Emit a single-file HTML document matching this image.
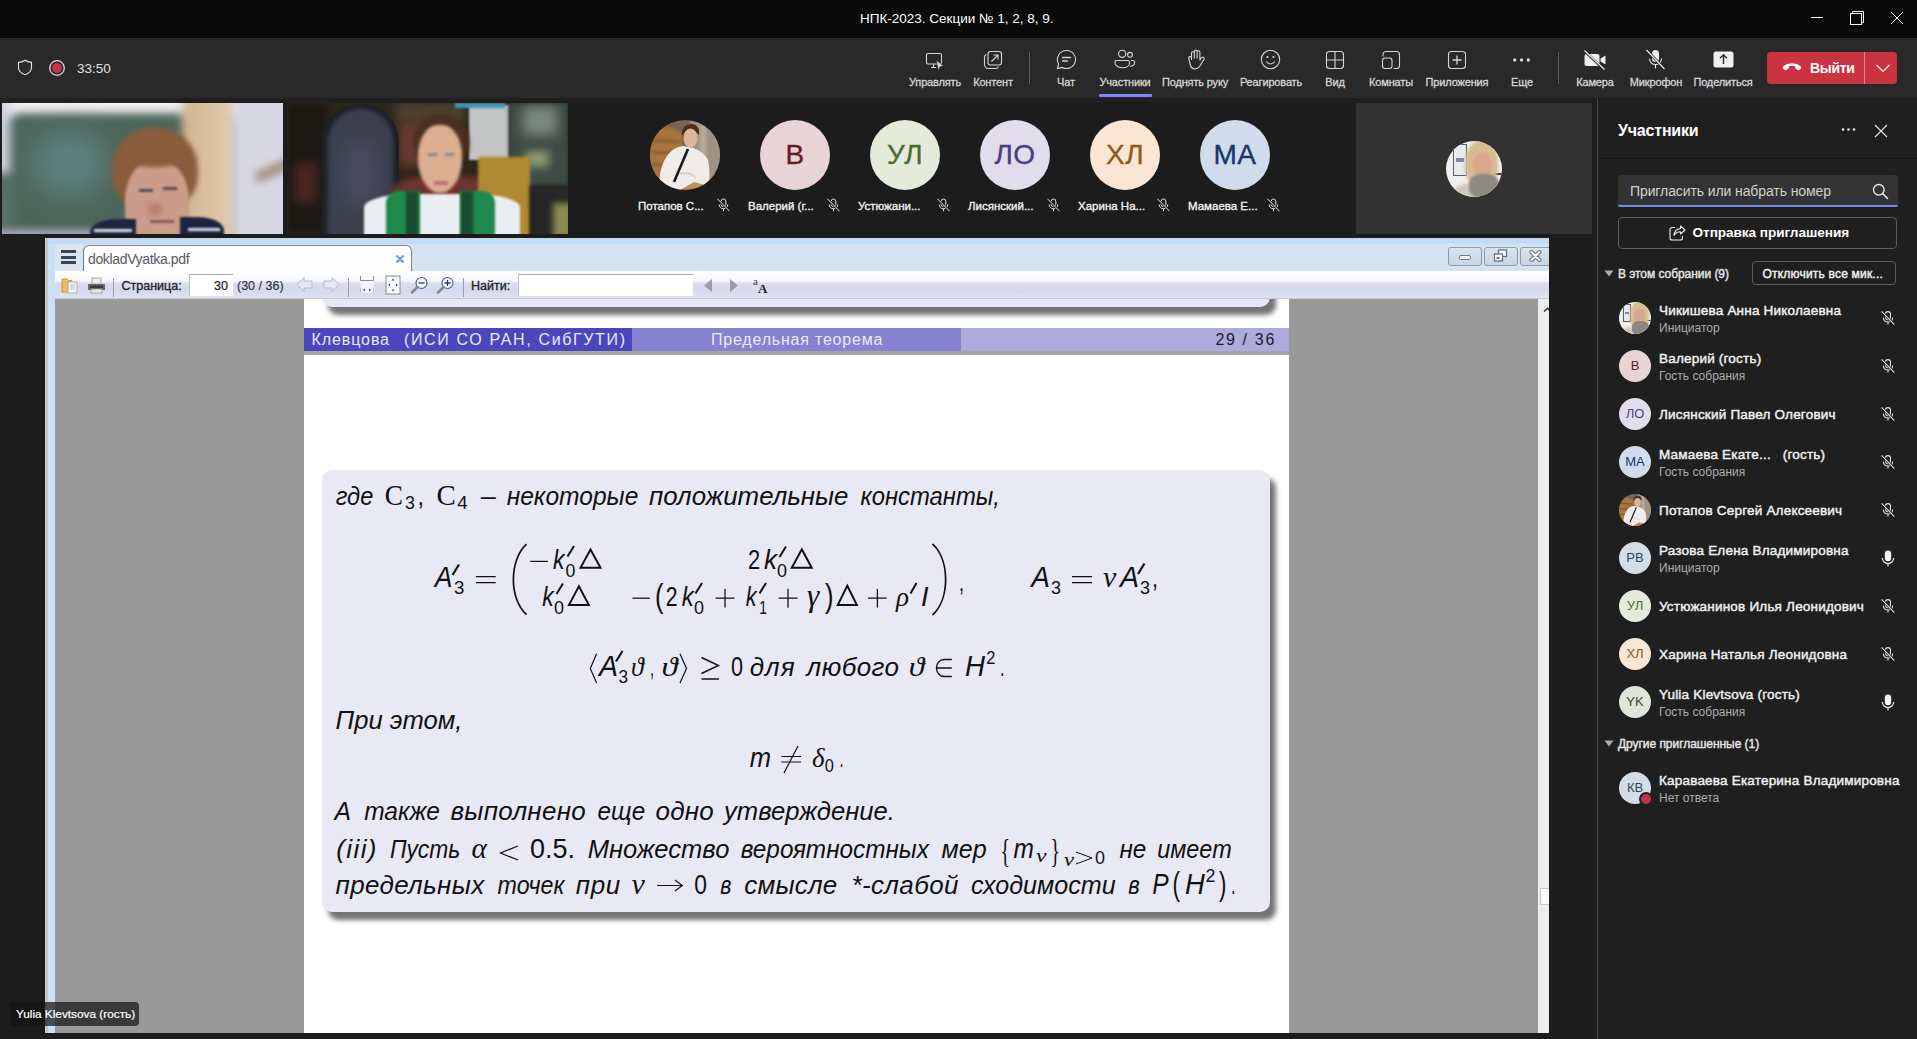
<!DOCTYPE html>
<html><head><meta charset="utf-8">
<style>
*{margin:0;padding:0;box-sizing:border-box}
html,body{width:1917px;height:1039px;overflow:hidden;background:#1c1c1c;font-family:"Liberation Sans",sans-serif}
.a{position:absolute}
.t{position:absolute;white-space:nowrap;line-height:1}
.lbl{color:#d6d6d6;font-size:11px;letter-spacing:-0.15px;-webkit-text-stroke:0.3px #d6d6d6}
.av{font-size:28px;letter-spacing:0.5px;-webkit-text-stroke:0.35px currentColor}
.nm{font-size:11.5px;color:#f0f0f0;-webkit-text-stroke:0.35px #f0f0f0}
.pn{font-size:13.5px;color:#f0f0f0;-webkit-text-stroke:0.45px #f0f0f0;letter-spacing:0.2px}
.ps{font-size:12px;color:#adadad}
.pav{left:1619px;width:32px;height:32px;border-radius:50%;font-size:13px;line-height:32px;text-align:center}
.foot{font-size:17.5px;letter-spacing:0.6px}
</style></head><body>
<svg width="0" height="0" style="position:absolute">
 <defs>
  <symbol id="micoff" viewBox="0 0 15 14">
   <rect x="5.2" y="1" width="4.6" height="7.6" rx="2.3" fill="none" stroke="#e6e6e6" stroke-width="1"/>
   <path d="M3.2 6.5C3.2 9 5.1 10.8 7.5 10.8S11.8 9 11.8 6.5M7.5 10.8V13.2" fill="none" stroke="#e6e6e6" stroke-width="1"/>
   <path d="M1.5 0.8L13.5 13.2" stroke="#1f1f1f" stroke-width="2.2"/>
   <path d="M1.5 0.8L13.5 13.2" stroke="#e6e6e6" stroke-width="1"/>
  </symbol>
  <symbol id="micon" viewBox="0 0 15 16">
   <rect x="4.5" y="0.5" width="6" height="10" rx="3" fill="#f0f0f0"/>
   <path d="M2.2 7.5C2.2 10.6 4.6 12.8 7.5 12.8S12.8 10.6 12.8 7.5M7.5 12.8V15.5" fill="none" stroke="#f0f0f0" stroke-width="1.1"/>
  </symbol>
 </defs>
</svg>
<!-- title bar -->
<div class="a" style="left:0;top:0;width:1917px;height:38px;background:#0a0a0a">
  <div class="t" style="left:860px;top:11.5px;font-size:13.5px;color:#fff">НПК-2023. Секции № 1, 2, 8, 9.</div>
  <div class="a" style="left:1811px;top:17px;width:12px;height:1px;background:#fff"></div>
  <svg class="a" style="left:1849px;top:10px" width="17" height="17" viewBox="0 0 17 17"><path d="M3.5 3.5V1.5H14.5V12.5H12.5" fill="none" stroke="#fff" stroke-width="1"/><rect x="1.5" y="3.5" width="11" height="11" fill="none" stroke="#fff" stroke-width="1"/></svg>
  <svg class="a" style="left:1890px;top:11px" width="14" height="14" viewBox="0 0 14 14"><path d="M1 1L13 13M13 1L1 13" stroke="#fff" stroke-width="1"/></svg>
</div>
<!-- toolbar -->
<div class="a" style="left:0;top:38px;width:1917px;height:60px;background:#292929">
  <svg class="a" style="left:17px;top:21px" width="16" height="17" viewBox="0 0 16 17"><path d="M8 1.2C5.8 2.6 3.6 3.3 1.5 3.4V8.6C1.5 11.8 3.6 14.2 8 15.8C12.4 14.2 14.5 11.8 14.5 8.6V3.4C12.4 3.3 10.2 2.6 8 1.2Z" fill="none" stroke="#e6e6e6" stroke-width="1.1"/></svg>
  <svg class="a" style="left:48px;top:21px" width="18" height="18" viewBox="0 0 18 18"><circle cx="9" cy="9" r="7.3" fill="none" stroke="#dcdcdc" stroke-width="1.3"/><circle cx="9" cy="9" r="5" fill="#c4314b"/></svg>
  <div class="t" style="left:77px;top:23.6px;font-size:13.5px;color:#e0e0e0">33:50</div>

  <!-- buttons: icons top 12 (abs 50), labels baseline abs 86 -> rel top 38.7 -->
  <svg class="a ic" style="left:924px;top:13px" width="20" height="20" viewBox="0 0 20 20"><rect x="2.5" y="2.5" width="15" height="10.5" rx="1.5" fill="none" stroke="#d6d6d6" stroke-width="1.1"/><path d="M7 16.5H12M9.5 13V16.5" stroke="#d6d6d6" stroke-width="1.1"/><path d="M12.3 9.2L19.6 15L16.2 15.6L14.2 19.6Z" fill="#d6d6d6" stroke="#292929" stroke-width="0.6"/></svg>
  <div class="t lbl" style="left:909px;top:39px;width:50px;text-align:center">Управлять</div>

  <svg class="a" style="left:983px;top:12px" width="20" height="20" viewBox="0 0 20 20"><rect x="5" y="1.5" width="13.5" height="13.5" rx="2.5" fill="none" stroke="#d6d6d6" stroke-width="1.1"/><path d="M3.2 4.5C2.2 5 1.5 6 1.5 7.2V14.5C1.5 16.7 3.3 18.5 5.5 18.5H12.8C14 18.5 15 17.8 15.5 16.8" fill="none" stroke="#d6d6d6" stroke-width="1.1"/><path d="M8.5 11.5L15 5M10.5 5H15V9.5" fill="none" stroke="#d6d6d6" stroke-width="1.1"/></svg>
  <div class="t lbl" style="left:968px;top:39px;width:50px;text-align:center">Контент</div>

  <div class="a" style="left:1029px;top:14px;width:1px;height:32px;background:#5c5c5c"></div>

  <svg class="a" style="left:1056px;top:11px" width="21" height="21" viewBox="0 0 21 21"><path d="M10.5 1.5A9 9 0 1 1 6.2 18.4L1.5 19.5L2.6 15A9 9 0 0 1 10.5 1.5Z" fill="none" stroke="#d6d6d6" stroke-width="1.1"/><path d="M6.5 8.5H14.5M6.5 12H11.5" stroke="#d6d6d6" stroke-width="1.3" stroke-linecap="round"/></svg>
  <div class="t lbl" style="left:1041px;top:39px;width:50px;text-align:center">Чат</div>

  <svg class="a" style="left:1114px;top:11px" width="22" height="20" viewBox="0 0 22 20"><circle cx="8.2" cy="4.8" r="3.6" fill="none" stroke="#d6d6d6" stroke-width="1.1"/><circle cx="16" cy="5.8" r="2.4" fill="none" stroke="#d6d6d6" stroke-width="1.1"/><path d="M2.5 11.5H14A1.5 1.5 0 0 1 15.5 13V14C15.5 17 12.5 18.8 8.8 18.8S1 17 1 14V13A1.5 1.5 0 0 1 2.5 11.5Z" fill="none" stroke="#d6d6d6" stroke-width="1.1"/><path d="M17 11.5H19A1.5 1.5 0 0 1 20.5 13V13.8C20.5 16 18.8 17.3 16 17.3" fill="none" stroke="#d6d6d6" stroke-width="1.1"/></svg>
  <div class="t lbl" style="left:1095px;top:39px;width:60px;text-align:center">Участники</div>
  <div class="a" style="left:1099px;top:56px;width:53px;height:2.5px;background:#7f85f5;border-radius:1px"></div>

  <svg class="a" style="left:1187px;top:11px" width="19" height="21" viewBox="0 0 19 21"><path d="M4.5 11V4.3C4.5 3.4 5.1 2.8 5.9 2.8S7.3 3.4 7.3 4.3V9.5M7.3 9.5V2.6C7.3 1.7 7.9 1.1 8.7 1.1S10.1 1.7 10.1 2.6V9.5M10.1 9.5V3.3C10.1 2.4 10.7 1.8 11.5 1.8S12.9 2.4 12.9 3.3V11L14.4 8.8C15 8 16 7.9 16.7 8.4C17.3 8.9 17.4 9.7 17 10.4L12.5 17.5C11.4 19.2 9.8 19.9 8 19.9C5.9 19.9 3.9 18.3 3.3 16L1.7 9.3C1.5 8.5 2 7.8 2.7 7.6C3.5 7.5 4.2 7.9 4.5 8.8" fill="none" stroke="#d6d6d6" stroke-width="1.1" stroke-linejoin="round"/></svg>
  <div class="t lbl" style="left:1160px;top:39px;width:70px;text-align:center">Поднять руку</div>

  <svg class="a" style="left:1260px;top:11px" width="21" height="21" viewBox="0 0 21 21"><circle cx="10.5" cy="10.5" r="9.2" fill="none" stroke="#d6d6d6" stroke-width="1.1"/><circle cx="7.5" cy="8" r="1.1" fill="#d6d6d6"/><circle cx="13.5" cy="8" r="1.1" fill="#d6d6d6"/><path d="M6.5 12.8C7.5 14.3 8.9 15 10.5 15S13.5 14.3 14.5 12.8" fill="none" stroke="#d6d6d6" stroke-width="1.1" stroke-linecap="round"/></svg>
  <div class="t lbl" style="left:1235px;top:39px;width:72px;text-align:center">Реагировать</div>

  <svg class="a" style="left:1325px;top:12px" width="20" height="20" viewBox="0 0 20 20"><rect x="1.5" y="1.5" width="17" height="17" rx="3" fill="none" stroke="#d6d6d6" stroke-width="1.1"/><path d="M10 1.5V18.5M1.5 10H18.5" stroke="#d6d6d6" stroke-width="1.1"/></svg>
  <div class="t lbl" style="left:1310px;top:39px;width:50px;text-align:center">Вид</div>

  <svg class="a" style="left:1381px;top:12px" width="20" height="20" viewBox="0 0 20 20"><path d="M2 6.5V4.5A3 3 0 0 1 5 1.5H15.5A3 3 0 0 1 18.5 4.5V15.5A3 3 0 0 1 15.5 18.5H12.5" fill="none" stroke="#d6d6d6" stroke-width="1.1"/><rect x="1.5" y="8" width="9.5" height="10.5" rx="2.5" fill="none" stroke="#d6d6d6" stroke-width="1.1"/></svg>
  <div class="t lbl" style="left:1361px;top:39px;width:60px;text-align:center">Комнаты</div>

  <svg class="a" style="left:1447px;top:12px" width="20" height="20" viewBox="0 0 20 20"><rect x="1.5" y="1.5" width="17" height="17" rx="3" fill="none" stroke="#d6d6d6" stroke-width="1.1"/><path d="M10 5.5V14.5M5.5 10H14.5" stroke="#d6d6d6" stroke-width="1.3"/></svg>
  <div class="t lbl" style="left:1422px;top:39px;width:70px;text-align:center">Приложения</div>

  <svg class="a" style="left:1512px;top:18px" width="20" height="8" viewBox="0 0 20 8"><circle cx="2.7" cy="4" r="1.7" fill="#d6d6d6"/><circle cx="9.5" cy="4" r="1.7" fill="#d6d6d6"/><circle cx="16.3" cy="4" r="1.7" fill="#d6d6d6"/></svg>
  <div class="t lbl" style="left:1497px;top:39px;width:50px;text-align:center">Еще</div>

  <div class="a" style="left:1558px;top:14px;width:1px;height:32px;background:#5c5c5c"></div>

  <svg class="a" style="left:1584px;top:12px" width="23" height="20" viewBox="0 0 23 20"><path d="M2.5 4H13.5A2 2 0 0 1 15.5 6V14A2 2 0 0 1 13.5 16H2.5A2 2 0 0 1 0.5 14V6A2 2 0 0 1 2.5 4Z" fill="#f0f0f0"/><path d="M16.5 8.5L21.5 5.5V14.5L16.5 11.5Z" fill="#f0f0f0"/><path d="M0 0.5L20 19.5" stroke="#292929" stroke-width="2.6"/><path d="M0.5 0.5L20.5 19.5" stroke="#f0f0f0" stroke-width="1.1"/></svg>
  <div class="t lbl" style="left:1570px;top:39px;width:50px;text-align:center">Камера</div>

  <svg class="a" style="left:1645px;top:11px" width="21" height="21" viewBox="0 0 21 21"><rect x="7" y="1" width="7" height="12" rx="3.5" fill="#f0f0f0"/><path d="M4.5 9.5C4.5 13 7.2 15.5 10.5 15.5S16.5 13 16.5 9.5M10.5 15.5V19.5" fill="none" stroke="#f0f0f0" stroke-width="1.1"/><path d="M1.5 1L19.5 20" stroke="#292929" stroke-width="2.6"/><path d="M1.5 1L19.5 20" stroke="#f0f0f0" stroke-width="1.1"/></svg>
  <div class="t lbl" style="left:1628px;top:39px;width:56px;text-align:center">Микрофон</div>

  <svg class="a" style="left:1713px;top:13px" width="21" height="17" viewBox="0 0 21 17"><rect x="0.5" y="0.5" width="20" height="16" rx="2.5" fill="#f0f0f0"/><path d="M10.5 13V4M7 7.3L10.5 3.8L14 7.3" fill="none" stroke="#292929" stroke-width="1.4"/></svg>
  <div class="t lbl" style="left:1690px;top:39px;width:66px;text-align:center">Поделиться</div>

  <div class="a" style="left:1767px;top:14px;width:130px;height:32px;background:#cc3340;border-radius:4px"></div>
  <div class="a" style="left:1864px;top:14px;width:1px;height:32px;background:#e4858e"></div>
  <svg class="a" style="left:1782px;top:24px" width="20" height="10" viewBox="0 0 20 10"><path d="M1.2 6.8C0.6 6.2 0.7 5.1 1.3 4.5C3.7 2.3 6.8 1.2 10 1.2S16.3 2.3 18.7 4.5C19.3 5.1 19.4 6.2 18.8 6.8L17.8 7.8C17.3 8.3 16.5 8.4 15.9 8L13.9 6.8C13.5 6.5 13.2 6 13.2 5.5V4.4C11.1 3.8 8.9 3.8 6.8 4.4V5.5C6.8 6 6.5 6.5 6.1 6.8L4.1 8C3.5 8.4 2.7 8.3 2.2 7.8Z" fill="#fff"/></svg>
  <div class="t" style="left:1810px;top:22.5px;font-size:14px;font-weight:bold;color:#fff;letter-spacing:-0.3px">Выйти</div>
  <svg class="a" style="left:1875px;top:25px" width="16" height="10" viewBox="0 0 16 10"><path d="M1.5 2L8 8.5L14.5 2" fill="none" stroke="#fff" stroke-width="1.2"/></svg>
</div>
<!-- stage bg -->
<div class="a" style="left:0;top:98px;width:1597px;height:941px;background:#1c1c1c"></div>
<div class="a" style="left:0;top:98px;width:1597px;height:5px;background:#1f1f1f"></div>
<!-- video 1 -->
<div class="a" style="left:2px;top:103px;width:281px;height:131px;overflow:hidden;background:#587068">
  <div class="a" style="left:-20px;top:-20px;width:330px;height:34px;background:#f6f2f4;filter:blur(5px)"></div>
  <div class="a" style="left:12px;top:12px;width:172px;height:135px;background:#4c665a;filter:blur(6px)"></div>
  <div class="a" style="left:30px;top:28px;width:75px;height:65px;background:#5c827e;filter:blur(14px);border-radius:50%"></div>
  <div class="a" style="left:180px;top:-10px;width:54px;height:160px;background:linear-gradient(90deg,#d4b48e,#e0ccb0);filter:blur(4px)"></div>
  <div class="a" style="left:230px;top:-10px;width:60px;height:160px;background:#d8d8e4;filter:blur(4px)"></div>
  <div class="a" style="left:252px;top:62px;width:40px;height:10px;background:#a08878;filter:blur(4px);transform:rotate(-25deg)"></div>
  <div class="a" style="left:-10px;top:-10px;width:18px;height:80px;background:#d0d2de;filter:blur(5px)"></div>
  <div class="a" style="left:-10px;top:126px;width:130px;height:14px;background:#9aa4b4;filter:blur(3px)"></div>
  <!-- woman -->
  <div class="a" style="left:110px;top:24px;width:86px;height:82px;background:#8a5c3c;border-radius:50% 50% 40% 40%;filter:blur(2.5px)"></div>
  <div class="a" style="left:123px;top:57px;width:64px;height:90px;background:#cc9c8a;border-radius:45% 45% 42% 42%;filter:blur(1.5px)"></div>
  <div class="a" style="left:118px;top:40px;width:70px;height:24px;background:#8a5c3c;border-radius:40% 40% 50% 50%;filter:blur(2px)"></div>
  <div class="a" style="left:137px;top:86px;width:14px;height:3px;background:#5a4a50;filter:blur(1.2px)"></div>
  <div class="a" style="left:161px;top:84px;width:14px;height:3px;background:#5a4a50;filter:blur(1.2px)"></div>
  <div class="a" style="left:146px;top:100px;width:14px;height:12px;background:#b88272;filter:blur(2.5px)"></div>
  <div class="a" style="left:148px;top:117px;width:24px;height:3px;background:#8a5a5a;filter:blur(1.2px)"></div>
  <div class="a" style="left:88px;top:116px;width:46px;height:22px;background:#1e2440;border-radius:60% 0 0 0;filter:blur(1px)"></div>
  <div class="a" style="left:178px;top:114px;width:44px;height:22px;background:#1e2440;border-radius:0 60% 0 0;filter:blur(1px)"></div>
  <div class="a" style="left:92px;top:126px;width:38px;height:3px;background:#d8dce8;filter:blur(0.8px)"></div>
  <div class="a" style="left:186px;top:125px;width:32px;height:3px;background:#d8dce8;filter:blur(0.8px)"></div>
</div>
<!-- video 2 -->
<div class="a" style="left:287px;top:103px;width:281px;height:131px;overflow:hidden;background:#2b2619">
  <div class="a" style="left:0;top:0;width:40px;height:131px;background:#1c1814;filter:blur(3px)"></div>
  <div class="a" style="left:8px;top:60px;width:22px;height:40px;background:#4a2620;filter:blur(5px)"></div>
  <div class="a" style="left:108px;top:0px;width:70px;height:20px;background:#4c4230;filter:blur(5px)"></div>
  <div class="a" style="left:112px;top:18px;width:28px;height:45px;background:#6a3a30;filter:blur(5px)"></div>
  <div class="a" style="left:35px;top:1px;width:77px;height:138px;background:#1e2026;border-radius:38px 38px 0 0"></div>
  <div class="a" style="left:41px;top:6px;width:65px;height:132px;background:#3c3f4e;border-radius:32px 32px 0 0;filter:blur(2px)"></div>
  <div class="a" style="left:58px;top:40px;width:30px;height:60px;background:#4a4e60;filter:blur(10px)"></div>
  <div class="a" style="left:103px;top:72px;width:112px;height:32px;background:#703430;border-radius:50%;filter:blur(3px)"></div>
  <div class="a" style="left:182px;top:2px;width:40px;height:55px;background:#c2c4c4;filter:blur(1px)"></div>
  <div class="a" style="left:168px;top:0px;width:50px;height:5px;background:#3a9ab8;filter:blur(1px)"></div>
  <div class="a" style="left:222px;top:0px;width:59px;height:84px;background:#3e4c44;filter:blur(2px)"></div>
  <div class="a" style="left:236px;top:4px;width:34px;height:28px;background:#7a8a80;filter:blur(6px)"></div>
  <div class="a" style="left:238px;top:48px;width:24px;height:16px;background:#8a9a70;filter:blur(4px)"></div>
  <div class="a" style="left:191px;top:54px;width:52px;height:82px;background:#b08a32;filter:blur(1.5px)"></div>
  <div class="a" style="left:243px;top:82px;width:45px;height:55px;background:#262626;filter:blur(2px)"></div>
  <div class="a" style="left:266px;top:100px;width:20px;height:35px;background:#8a8a50;filter:blur(3px)"></div>
  <!-- woman -->
  <div class="a" style="left:126px;top:10px;width:56px;height:58px;background:#4a3020;border-radius:50%;filter:blur(2px)"></div>
  <div class="a" style="left:131px;top:22px;width:44px;height:68px;background:#dcae90;border-radius:45% 45% 50% 50%;filter:blur(1.5px)"></div>
  <div class="a" style="left:77px;top:91px;width:156px;height:45px;background:#eaeef2;border-radius:30% 30% 0 0;filter:blur(1px)"></div>
  <div class="a" style="left:99px;top:88px;width:34px;height:48px;background:#1f8a4c;filter:blur(1px);border-radius:12px 0 0 0"></div>
  <div class="a" style="left:173px;top:88px;width:35px;height:48px;background:#1f8a4c;filter:blur(1px);border-radius:0 12px 0 0"></div>
  <div class="a" style="left:119px;top:88px;width:12px;height:48px;background:#1a4a30;filter:blur(1.5px)"></div>
  <div class="a" style="left:174px;top:88px;width:12px;height:48px;background:#1a4a30;filter:blur(1.5px)"></div>
  <div class="a" style="left:141px;top:50px;width:9px;height:3px;background:#8a8a90;filter:blur(1px)"></div>
  <div class="a" style="left:158px;top:50px;width:9px;height:3px;background:#8a8a90;filter:blur(1px)"></div>
  <div class="a" style="left:147px;top:78px;width:14px;height:4px;background:#c0707a;filter:blur(1px)"></div>
</div>

<!-- avatar row -->
<svg class="a" style="left:650px;top:120px" width="70" height="70" viewBox="0 0 70 70">
  <defs><clipPath id="cpp1"><circle cx="35" cy="35" r="35"/></clipPath><filter id="blp1" x="-20%" y="-20%" width="140%" height="140%"><feGaussianBlur stdDeviation="1.5"/></filter></defs>
  <g clip-path="url(#cpp1)">
    <rect width="70" height="70" fill="#7a6454"/>
    <g filter="url(#blp1)">
      <rect x="40" y="0" width="34" height="70" fill="#a09282"/>
      <rect x="50" y="5" width="6" height="50" fill="#b8aa9a"/>
      <path d="M-2 10C8 4 22 6 32 14V70H-2Z" fill="#a8743e"/>
      <path d="M0 20L30 22M2 32L30 34M2 44L30 46" stroke="#7a5028" stroke-width="2"/>
      <path d="M28 70C30 58 44 52 72 56V70Z" fill="#c0905a"/>
    </g>
    <path d="M32 16C31 9 35 4 41 4C47 4 50 8 49 15L47 13C44 10 37 10 34 13Z" fill="#4a3020"/>
    <ellipse cx="40.5" cy="18" rx="7" ry="9.5" fill="#e0b49c"/>
    <path d="M10 68C8 52 14 34 26 28C30 26 36 26 38 27C46 28 54 32 58 40C60 50 60 58 58 66L44 62L30 70Z" fill="#f0ecea"/>
    <path d="M38 29L24 62" stroke="#1a1a1a" stroke-width="2.6"/>
    <path d="M30 54C36 52 42 54 46 58" stroke="#d8d0cc" stroke-width="2" fill="none"/>
  </g>
</svg>
<div class="a" style="left:760px;top:120px;width:70px;height:70px;border-radius:50%;background:#e8d4d6"></div>
<div class="a" style="left:870px;top:120px;width:70px;height:70px;border-radius:50%;background:#e4ecd9"></div>
<div class="a" style="left:980px;top:120px;width:70px;height:70px;border-radius:50%;background:#e2dded"></div>
<div class="a" style="left:1090px;top:120px;width:70px;height:70px;border-radius:50%;background:#fbe6d3"></div>
<div class="a" style="left:1200px;top:120px;width:70px;height:70px;border-radius:50%;background:#d0dceb"></div>
<div class="t av" style="left:760px;top:141.3px;width:70px;text-align:center;color:#6b1a24">В</div>
<div class="t av" style="left:870px;top:141.3px;width:70px;text-align:center;color:#4c6b30">УЛ</div>
<div class="t av" style="left:980px;top:141.3px;width:70px;text-align:center;color:#4b4078">ЛО</div>
<div class="t av" style="left:1090px;top:141.3px;width:70px;text-align:center;color:#8a5a1e">ХЛ</div>
<div class="t av" style="left:1200px;top:141.3px;width:70px;text-align:center;color:#143868">МА</div>

<div class="t nm" style="left:638px;top:200.6px">Потапов С...</div>
<div class="t nm" style="left:748px;top:200.6px">Валерий (г...</div>
<div class="t nm" style="left:858px;top:200.6px">Устюжани...</div>
<div class="t nm" style="left:968px;top:200.6px">Лисянский...</div>
<div class="t nm" style="left:1078px;top:200.6px">Харина На...</div>
<div class="t nm" style="left:1188px;top:200.6px">Мамаева Е...</div>
<svg class="a" style="left:716px;top:198px" width="15" height="14"><use href="#micoff"/></svg>
<svg class="a" style="left:826px;top:198px" width="15" height="14"><use href="#micoff"/></svg>
<svg class="a" style="left:936px;top:198px" width="15" height="14"><use href="#micoff"/></svg>
<svg class="a" style="left:1046px;top:198px" width="15" height="14"><use href="#micoff"/></svg>
<svg class="a" style="left:1156px;top:198px" width="15" height="14"><use href="#micoff"/></svg>
<svg class="a" style="left:1266px;top:198px" width="15" height="14"><use href="#micoff"/></svg>

<!-- right tile -->
<div class="a" style="left:1356px;top:103px;width:236px;height:131px;background:#323232"></div>
<div class="a" style="left:1446px;top:140.5px;width:56px;height:56px;border-radius:50%;overflow:hidden;background:#f2f0ee">
  <div class="a" style="left:7.0px;top:3.0px;width:13.5px;height:32.0px;border:1px solid #5a5a68;background:#e6eaf2"></div>
  <div class="a" style="left:10.0px;top:17.0px;width:8.0px;height:4.0px;background:#7a88aa;filter:blur(0.6px)"></div>
  <div class="a" style="left:46.0px;top:32.0px;width:12.0px;height:2.0px;background:#3a3228"></div>
  <div class="a" style="left:19.0px;top:-1.0px;width:33.0px;height:44.0px;background:#d6bc90;border-radius:50% 50% 35% 35%;filter:blur(1.5px)"></div>
  <div class="a" style="left:27.0px;top:12.0px;width:19.0px;height:24.0px;background:#d8a68e;border-radius:45%;filter:blur(1.0px)"></div>
  <div class="a" style="left:8.0px;top:42.0px;width:48.0px;height:20.0px;background:#d2cabe;border-radius:40% 40% 0 0;filter:blur(1.5px)"></div>
  <div class="a" style="left:23.0px;top:33.0px;width:30.0px;height:24.0px;background:#8c8882;border-radius:40%;filter:blur(1.2px)"></div>
</div>
<!-- PDF viewer window -->
<div class="a" style="left:45px;top:238px;width:1504px;height:795px;background:#c6dcf2;overflow:hidden">
  <div class="a" style="left:0;top:0;width:3px;height:795px;background:#c4c8cc"></div>
  <div class="a" style="left:3px;top:0;width:1501px;height:6px;background:#c2dcf8"></div>
  <div class="a" style="left:0;top:0;width:1504px;height:1px;background:#d2d6da"></div>
  <div class="a" style="left:10px;top:6px;width:1494px;height:27px;background:#d5e3f0"></div>
  <div class="a" style="left:3px;top:6px;width:7px;height:789px;background:#c8e0f8"></div>
  <!-- hamburger -->
  <div class="a" style="left:10px;top:7px;width:28px;height:26px;background:#dbe5ef"></div>
  <div class="a" style="left:16px;top:12px;width:15px;height:3px;background:#36465a"></div>
  <div class="a" style="left:16px;top:17.5px;width:15px;height:3px;background:#36465a"></div>
  <div class="a" style="left:16px;top:23px;width:15px;height:3px;background:#36465a"></div>
  <!-- tab -->
  <div class="a" style="left:38px;top:7px;width:329px;height:27px;background:#fdfdfe;border-top:1px solid #7c8694;border-left:1px solid #6c7480;border-right:1.5px solid #7a808a;border-radius:6px 6px 0 0"></div>
  <div class="t" style="left:43px;top:13.7px;font-size:14px;color:#5a5a60;letter-spacing:-0.35px">dokladVyatka.pdf</div>
  <svg class="a" style="left:350px;top:16px" width="10" height="10" viewBox="0 0 10 10"><path d="M1.5 1.5L8.5 8.5M8.5 1.5L1.5 8.5" stroke="#7c9cc2" stroke-width="2"/></svg>
  <!-- window buttons -->
  <div class="a" style="left:1403px;top:9px;width:34px;height:19px;border:1px solid #8a9aac;border-radius:3px;background:linear-gradient(#d8e4ee,#c8d6e4)"></div>
  <div class="a" style="left:1414px;top:17px;width:12px;height:5px;border:1px solid #707880;border-radius:2px;background:#fff"></div>
  <div class="a" style="left:1439px;top:9px;width:34px;height:19px;border:1px solid #8a9aac;border-radius:3px;background:linear-gradient(#d8e4ee,#c8d6e4)"></div>
  <svg class="a" style="left:1448px;top:11px" width="16" height="14" viewBox="0 0 16 14"><rect x="5.5" y="1" width="8" height="6.5" fill="#fff" stroke="#6a7078" stroke-width="1.3"/><rect x="1.5" y="5" width="8" height="7" fill="#fff" stroke="#6a7078" stroke-width="1.3"/><rect x="3.5" y="8" width="3" height="2" fill="#6a7078"/></svg>
  <div class="a" style="left:1475px;top:9px;width:34px;height:19px;border:1px solid #8a9aac;border-radius:3px;background:linear-gradient(#d8e4ee,#c8d6e4)"></div>
  <svg class="a" style="left:1484px;top:12px" width="13" height="12" viewBox="0 0 13 12"><path d="M2.5 2L10.5 10M10.5 2L2.5 10" stroke="#6a7078" stroke-width="4.2" stroke-linecap="round"/><path d="M2.5 2L10.5 10M10.5 2L2.5 10" stroke="#fafafa" stroke-width="2.2" stroke-linecap="round"/></svg>
  <!-- toolbar -->
  <div class="a" style="left:10px;top:33px;width:1494px;height:28px;background:linear-gradient(#ffffff 0%,#f8f8fc 35%,#dadcee 45%,#d6d9ec 70%,#e2e4f4 100%)"></div>
  <div class="a" style="left:10px;top:60px;width:1494px;height:1px;background:#c6c8d8"></div>
  <!-- folder icon -->
  <svg class="a" style="left:16px;top:38px" width="18" height="18" viewBox="0 0 18 18"><path d="M1 3H6L7.5 4.5H11V16H1Z" fill="#e8c060" stroke="#b89030" stroke-width="0.8"/><rect x="7" y="6" width="9" height="11" fill="#f4f4f4" stroke="#a0a0a0" stroke-width="0.8"/><path d="M9 9H14M9 11H14M9 13H14" stroke="#b0b8c0" stroke-width="0.8"/></svg>
  <!-- print icon -->
  <svg class="a" style="left:42px;top:39px" width="19" height="17" viewBox="0 0 19 17"><rect x="5" y="1" width="9" height="6" fill="#f0f0f0" stroke="#9a9a9a" stroke-width="0.8"/><path d="M1 7H18V13H1Z" fill="#6a6a70"/><rect x="3" y="8.5" width="13" height="3" fill="#3a3a40"/><rect x="4" y="12" width="11" height="4" fill="#e8e8e8" stroke="#9a9a9a" stroke-width="0.8"/></svg>
  <div class="a" style="left:68px;top:40px;width:1px;height:19px;background:#9a9aa8"></div>
  <div class="t" style="left:76.5px;top:42px;font-size:12.5px;color:#20202a;-webkit-text-stroke:0.3px #20202a">Страница:</div>
  <div class="a" style="left:144px;top:36px;width:44px;height:22px;background:#fff;border-top:1px solid #a8a8b0;border-left:1px solid #c0c0c8"></div>
  <div class="t" style="left:169px;top:42px;font-size:12.5px;color:#20202a;-webkit-text-stroke:0.2px #20202a">30</div>
  <div class="t" style="left:192px;top:42px;font-size:12.5px;color:#303040;-webkit-text-stroke:0.15px #303040">(30 / 36)</div>
  <!-- nav arrows -->
  <svg class="a" style="left:251px;top:38px" width="18" height="17" viewBox="0 0 18 17"><path d="M1 8.5L8 1.5V5H16V12H8V15.5Z" fill="#e6e8f0" stroke="#b8bcc8" stroke-width="1"/></svg>
  <svg class="a" style="left:277px;top:38px" width="18" height="17" viewBox="0 0 18 17"><path d="M17 8.5L10 1.5V5H2V12H10V15.5Z" fill="#e6e8f0" stroke="#b8bcc8" stroke-width="1"/></svg>
  <div class="a" style="left:302.5px;top:40px;width:1px;height:19px;background:#9a9aa8"></div>
  <svg class="a" style="left:314px;top:37px" width="16" height="19" viewBox="0 0 16 19"><path d="M1.5 1V5.5H14.5V1M1.5 18V13H14.5V18" fill="none" stroke="#8a8a98" stroke-width="1"/><rect x="1.5" y="7" width="13" height="11" fill="#f2f4fa"/><path d="M4 15L6 13.5V16.5ZM12 15L10 13.5V16.5Z" fill="#2a4aa0"/></svg>
  <svg class="a" style="left:340px;top:37px" width="16" height="20" viewBox="0 0 16 20"><rect x="1" y="1" width="14" height="18" fill="#fafafc" stroke="#8a8a98" stroke-width="1"/><path d="M8 3.5L6.5 5.5H9.5ZM8 16.5L6.5 14.5H9.5ZM3 10L5 8.5V11.5ZM13 10L11 8.5V11.5Z" fill="#2a4aa0"/></svg>
  <svg class="a" style="left:365px;top:38px" width="19" height="19" viewBox="0 0 19 19"><circle cx="11.5" cy="7" r="5.5" fill="#f4f6ff" stroke="#4a5ab8" stroke-width="1.2"/><path d="M8.5 7H14.5" stroke="#3a3a50" stroke-width="1.3"/><path d="M7.5 11L2 16.5" stroke="#8a8a90" stroke-width="2.6" stroke-linecap="round"/></svg>
  <svg class="a" style="left:391px;top:38px" width="19" height="19" viewBox="0 0 19 19"><circle cx="11.5" cy="7" r="5.5" fill="#f4f6ff" stroke="#4a5ab8" stroke-width="1.2"/><path d="M8.5 7H14.5M11.5 4V10" stroke="#3a3a50" stroke-width="1.3"/><path d="M7.5 11L2 16.5" stroke="#8a8a90" stroke-width="2.6" stroke-linecap="round"/></svg>
  <div class="a" style="left:417.5px;top:40px;width:1px;height:19px;background:#9a9aa8"></div>
  <div class="t" style="left:426px;top:42px;font-size:12.5px;color:#20202a;-webkit-text-stroke:0.3px #20202a">Найти:</div>
  <div class="a" style="left:473px;top:36px;width:175px;height:22px;background:#fff;border-top:1px solid #a8a8b0;border-left:1px solid #c0c0c8"></div>
  <svg class="a" style="left:658px;top:40px" width="10" height="15" viewBox="0 0 10 15"><path d="M9 1V14L1 7.5Z" fill="#9a9aa8"/></svg>
  <svg class="a" style="left:684px;top:40px" width="10" height="15" viewBox="0 0 10 15"><path d="M1 1V14L9 7.5Z" fill="#9a9aa8"/></svg>
  <div class="t" style="left:708px;top:38px;font-size:11px;color:#404050;font-family:'Liberation Serif',serif">a</div>
  <div class="t" style="left:713px;top:44px;font-size:13px;color:#202030;font-family:'Liberation Serif',serif;font-weight:bold">A</div>
  <!-- document area -->
  <div class="a" style="left:10px;top:61px;width:1483px;height:734px;background:#999999"></div>
  <div class="a" style="left:1493px;top:61px;width:11px;height:734px;background:#eeeeee"></div>
  <svg class="a" style="left:1498px;top:69px" width="8" height="5" viewBox="0 0 8 5"><path d="M1 4.5L4.5 1.2L8 4.5" fill="none" stroke="#303030" stroke-width="1.5"/></svg>
  <div class="a" style="left:1495px;top:650px;width:9px;height:17px;background:#fafafa;border:1px solid #c8c8c8;border-right:none"></div>
  <!-- page -->
  <div class="a" style="left:259px;top:61px;width:985px;height:734px;background:#ffffff;overflow:hidden">
    <!-- previous block bottom -->
    <div class="a" style="left:18px;top:-30px;width:948px;height:38px;background:#e7e6f6;border-radius:0 0 10px 10px;box-shadow:6px 8px 5px rgba(0,0,0,0.55)"></div>
    <!-- footer -->
    <div class="a" style="left:0;top:29px;width:985px;height:27px;background:#a4a4ac"></div>
    <div class="a" style="left:0;top:29px;width:328px;height:23px;background:#4a47be"></div>
    <div class="a" style="left:328px;top:29px;width:329px;height:23px;background:#8682d0"></div>
    <div class="a" style="left:657px;top:29px;width:328px;height:23px;background:#aeaade"></div>
    <!-- main block -->
    <div class="a" style="left:18px;top:171px;width:948px;height:442px;background:#e9e8f5;border-radius:10px;box-shadow:6px 8px 5px rgba(0,0,0,0.55)"></div>
  </div>
</div>
<svg class="a" style="left:0;top:0" width="1917" height="1039" viewBox="0 0 1917 1039">
<text x="335.7" y="504.6" font-family="Liberation Sans" font-size="26" font-style="italic" font-weight="normal" fill="#111" textLength="37.6" lengthAdjust="spacingAndGlyphs">где</text>
<text x="384.8" y="505.1" font-family="Liberation Serif" font-size="29" font-style="normal" font-weight="normal" fill="#111" textLength="18.2" lengthAdjust="spacingAndGlyphs">C</text>
<text x="405.1" y="509.1" font-family="Liberation Sans" font-size="19" font-style="normal" font-weight="normal" fill="#111" textLength="9.9" lengthAdjust="spacingAndGlyphs">3</text>
<text x="417.5" y="504.6" font-family="Liberation Sans" font-size="26" font-style="normal" font-weight="normal" fill="#111" textLength="6.5" lengthAdjust="spacingAndGlyphs">,</text>
<text x="436.4" y="505.1" font-family="Liberation Serif" font-size="29" font-style="normal" font-weight="normal" fill="#111" textLength="19.3" lengthAdjust="spacingAndGlyphs">C</text>
<text x="457.3" y="509.1" font-family="Liberation Sans" font-size="19" font-style="normal" font-weight="normal" fill="#111" textLength="10.4" lengthAdjust="spacingAndGlyphs">4</text>
<text x="480.8" y="504.6" font-family="Liberation Sans" font-size="26" font-style="normal" font-weight="normal" fill="#111" textLength="15.1" lengthAdjust="spacingAndGlyphs">–</text>
<text x="506.7" y="504.6" font-family="Liberation Sans" font-size="26" font-style="italic" font-weight="normal" fill="#111" textLength="131.6" lengthAdjust="spacingAndGlyphs">некоторые</text>
<text x="649" y="504.6" font-family="Liberation Sans" font-size="26" font-style="italic" font-weight="normal" fill="#111" textLength="199.5" lengthAdjust="spacingAndGlyphs">положительные</text>
<text x="860.5" y="504.6" font-family="Liberation Sans" font-size="26" font-style="italic" font-weight="normal" fill="#111" textLength="139.5" lengthAdjust="spacingAndGlyphs">константы,</text>
<text x="434.7" y="587" font-family="Liberation Sans" font-size="29" font-style="italic" font-weight="normal" fill="#111" textLength="17.7" lengthAdjust="spacingAndGlyphs">A</text>
<path d="M459 564.5L452.5 575" fill="none" stroke="#111" stroke-width="2.2" stroke-linecap="butt"/>
<text x="454" y="594" font-family="Liberation Sans" font-size="19" font-style="normal" font-weight="normal" fill="#111" textLength="10.4" lengthAdjust="spacingAndGlyphs">3</text>
<path d="M475.9 576.5H495.7M475.9 582.6H495.7" fill="none" stroke="#111" stroke-width="1.25" stroke-linecap="butt"/>
<path d="M526.5 544.2C509 560 509 599 526.5 614.6" fill="none" stroke="#111" stroke-width="1.7" stroke-linecap="butt"/>
<path d="M932.5 543.8C950 560 950 599 932.5 615.1" fill="none" stroke="#111" stroke-width="1.7" stroke-linecap="butt"/>
<path d="M530.2 561.4H547.9" fill="none" stroke="#111" stroke-width="1.25" stroke-linecap="butt"/>
<text x="553.1" y="568.6" font-family="Liberation Sans" font-size="28" font-style="italic" font-weight="normal" fill="#111" textLength="11.5" lengthAdjust="spacingAndGlyphs">k</text>
<path d="M574 546L567.5 556.5" fill="none" stroke="#111" stroke-width="2.0" stroke-linecap="butt"/>
<text x="565.6" y="577.0" font-family="Liberation Sans" font-size="19" font-style="normal" font-weight="normal" fill="#111" textLength="9.9" lengthAdjust="spacingAndGlyphs">0</text>
<path d="M590.5 549.5L600.5 567.8H580.5Z" fill="none" stroke="#111" stroke-width="2.0" stroke-linejoin="miter"/>
<text x="748" y="568.6" font-family="Liberation Sans" font-size="28" font-style="normal" font-weight="normal" fill="#111" textLength="12.2" lengthAdjust="spacingAndGlyphs">2</text>
<text x="764" y="568.6" font-family="Liberation Sans" font-size="28" font-style="italic" font-weight="normal" fill="#111" textLength="13.0" lengthAdjust="spacingAndGlyphs">k</text>
<path d="M786 546.5L779.5 557" fill="none" stroke="#111" stroke-width="2.0" stroke-linecap="butt"/>
<text x="777" y="577.0" font-family="Liberation Sans" font-size="19" font-style="normal" font-weight="normal" fill="#111" textLength="10.0" lengthAdjust="spacingAndGlyphs">0</text>
<path d="M801.8 549.3L811.7 567.8H791.8Z" fill="none" stroke="#111" stroke-width="2.0" stroke-linejoin="miter"/>
<text x="542.2" y="605.7" font-family="Liberation Sans" font-size="28" font-style="italic" font-weight="normal" fill="#111" textLength="11.4" lengthAdjust="spacingAndGlyphs">k</text>
<path d="M563 583.5L556.5 594" fill="none" stroke="#111" stroke-width="2.0" stroke-linecap="butt"/>
<text x="554" y="613.7" font-family="Liberation Sans" font-size="19" font-style="normal" font-weight="normal" fill="#111" textLength="10.0" lengthAdjust="spacingAndGlyphs">0</text>
<path d="M578.9 586.3L588.8 604.9H569Z" fill="none" stroke="#111" stroke-width="2.0" stroke-linejoin="miter"/>
<path d="M632.5 598.2H649.9" fill="none" stroke="#111" stroke-width="1.25" stroke-linecap="butt"/>
<text x="655" y="606.7" font-family="Liberation Sans" font-size="33" font-style="normal" font-weight="normal" fill="#111" textLength="8.5" lengthAdjust="spacingAndGlyphs">(</text>
<text x="665.8" y="605.7" font-family="Liberation Sans" font-size="28" font-style="normal" font-weight="normal" fill="#111" textLength="11.8" lengthAdjust="spacingAndGlyphs">2</text>
<text x="681.8" y="605.7" font-family="Liberation Sans" font-size="28" font-style="italic" font-weight="normal" fill="#111" textLength="11.9" lengthAdjust="spacingAndGlyphs">k</text>
<path d="M702 583L695.5 593.5" fill="none" stroke="#111" stroke-width="2.0" stroke-linecap="butt"/>
<text x="694" y="613.7" font-family="Liberation Sans" font-size="19" font-style="normal" font-weight="normal" fill="#111" textLength="10.0" lengthAdjust="spacingAndGlyphs">0</text>
<path d="M715.6 598.2H734.4M725.0 588.8V607.6" fill="none" stroke="#111" stroke-width="1.25" stroke-linecap="butt"/>
<text x="745.7" y="605.7" font-family="Liberation Sans" font-size="28" font-style="italic" font-weight="normal" fill="#111" textLength="10.8" lengthAdjust="spacingAndGlyphs">k</text>
<path d="M766 583L759.5 593.5" fill="none" stroke="#111" stroke-width="2.0" stroke-linecap="butt"/>
<text x="759.3" y="613.7" font-family="Liberation Sans" font-size="19" font-style="normal" font-weight="normal" fill="#111" textLength="7.7" lengthAdjust="spacingAndGlyphs">1</text>
<path d="M778.5 598.2H797.6M788.0 588.7V607.8" fill="none" stroke="#111" stroke-width="1.25" stroke-linecap="butt"/>
<text x="807" y="605.7" font-family="Liberation Serif" font-size="31" font-style="italic" font-weight="normal" fill="#111">γ</text>
<text x="825" y="606.7" font-family="Liberation Sans" font-size="33" font-style="normal" font-weight="normal" fill="#111" textLength="8.5" lengthAdjust="spacingAndGlyphs">)</text>
<path d="M847.3 585.8L856.8 604.9H837.8Z" fill="none" stroke="#111" stroke-width="2.0" stroke-linejoin="miter"/>
<path d="M868 598.2H886.7M877.4 588.9V607.6" fill="none" stroke="#111" stroke-width="1.25" stroke-linecap="butt"/>
<text x="896" y="605.7" font-family="Liberation Serif" font-size="27" font-style="italic" font-weight="normal" fill="#111">ρ</text>
<path d="M916.5 583L910.5 593.5" fill="none" stroke="#111" stroke-width="2.0" stroke-linecap="butt"/>
<text x="921" y="605.7" font-family="Liberation Sans" font-size="28" font-style="italic" font-weight="normal" fill="#111" textLength="7.5" lengthAdjust="spacingAndGlyphs">I</text>
<text x="959" y="591" font-family="Liberation Sans" font-size="26" font-style="normal" font-weight="normal" fill="#111" textLength="5.0" lengthAdjust="spacingAndGlyphs">,</text>
<text x="1031.3" y="587" font-family="Liberation Sans" font-size="29" font-style="italic" font-weight="normal" fill="#111" textLength="18.7" lengthAdjust="spacingAndGlyphs">A</text>
<text x="1051" y="594" font-family="Liberation Sans" font-size="19" font-style="normal" font-weight="normal" fill="#111" textLength="10.0" lengthAdjust="spacingAndGlyphs">3</text>
<path d="M1072 576.5H1092M1072 582.6H1092" fill="none" stroke="#111" stroke-width="1.25" stroke-linecap="butt"/>
<text x="1103" y="587" font-family="Liberation Serif" font-size="30" font-style="italic" font-weight="normal" fill="#111">ν</text>
<text x="1120" y="587" font-family="Liberation Sans" font-size="29" font-style="italic" font-weight="normal" fill="#111" textLength="19.0" lengthAdjust="spacingAndGlyphs">A</text>
<path d="M1144.5 563.5L1138 574" fill="none" stroke="#111" stroke-width="2.2" stroke-linecap="butt"/>
<text x="1140" y="594" font-family="Liberation Sans" font-size="19" font-style="normal" font-weight="normal" fill="#111" textLength="10.0" lengthAdjust="spacingAndGlyphs">3</text>
<text x="1152" y="587" font-family="Liberation Sans" font-size="26" font-style="normal" font-weight="normal" fill="#111" textLength="6.0" lengthAdjust="spacingAndGlyphs">,</text>
<path d="M596.6 653.8L590.3 668.4L596.6 683" fill="none" stroke="#111" stroke-width="1.2" stroke-linecap="butt"/>
<text x="598.9" y="675.6" font-family="Liberation Sans" font-size="29" font-style="italic" font-weight="normal" fill="#111" textLength="19.0" lengthAdjust="spacingAndGlyphs">A</text>
<path d="M622.5 651L616 661.5" fill="none" stroke="#111" stroke-width="2.2" stroke-linecap="butt"/>
<text x="618.4" y="682.6" font-family="Liberation Sans" font-size="19" font-style="normal" font-weight="normal" fill="#111" textLength="9.6" lengthAdjust="spacingAndGlyphs">3</text>
<text x="631" y="675.6" font-family="Liberation Serif" font-size="27" font-style="italic" font-weight="normal" fill="#111" textLength="12.7" lengthAdjust="spacingAndGlyphs">ϑ</text>
<text x="650" y="675.6" font-family="Liberation Sans" font-size="26" font-style="normal" font-weight="normal" fill="#111" textLength="4.0" lengthAdjust="spacingAndGlyphs">,</text>
<text x="661.5" y="675.6" font-family="Liberation Serif" font-size="27" font-style="italic" font-weight="normal" fill="#111" textLength="16.0" lengthAdjust="spacingAndGlyphs">ϑ</text>
<path d="M680 653.8L686.5 668.4L680 683" fill="none" stroke="#111" stroke-width="1.2" stroke-linecap="butt"/>
<path d="M701.5 657.5L718.5 665.5L701.5 673.5M701.5 679H718.9" fill="none" stroke="#111" stroke-width="1.4" stroke-linecap="butt"/>
<text x="731" y="675.6" font-family="Liberation Sans" font-size="28" font-style="normal" font-weight="normal" fill="#111" textLength="12.0" lengthAdjust="spacingAndGlyphs">0</text>
<text x="749.8" y="675.6" font-family="Liberation Sans" font-size="26" font-style="italic" font-weight="normal" fill="#111" textLength="44.8" lengthAdjust="spacing">для</text>
<text x="806.6" y="675.6" font-family="Liberation Sans" font-size="26" font-style="italic" font-weight="normal" fill="#111" textLength="92.4" lengthAdjust="spacing">любого</text>
<text x="908.8" y="675.6" font-family="Liberation Serif" font-size="27" font-style="italic" font-weight="normal" fill="#111" textLength="15.5" lengthAdjust="spacingAndGlyphs">ϑ</text>
<path d="M951.8 659.5H944A7.6 8.5 0 0 0 944 676.5H951.8M936.8 668H951.8" fill="none" stroke="#111" stroke-width="1.3" stroke-linecap="butt"/>
<text x="965" y="675.6" font-family="Liberation Sans" font-size="29" font-style="italic" font-weight="normal" fill="#111" textLength="20.0" lengthAdjust="spacingAndGlyphs">H</text>
<text x="986.2" y="663.5" font-family="Liberation Sans" font-size="19" font-style="normal" font-weight="normal" fill="#111" textLength="9.2" lengthAdjust="spacingAndGlyphs">2</text>
<text x="1000" y="675.6" font-family="Liberation Sans" font-size="26" font-style="normal" font-weight="normal" fill="#111" textLength="4.5" lengthAdjust="spacingAndGlyphs">.</text>
<text x="335.6" y="729.4" font-family="Liberation Sans" font-size="26" font-style="italic" font-weight="normal" fill="#111" textLength="126.8" lengthAdjust="spacingAndGlyphs">При этом,</text>
<text x="749.7" y="766.6" font-family="Liberation Sans" font-size="28" font-style="italic" font-weight="normal" fill="#111" textLength="21.3" lengthAdjust="spacingAndGlyphs">m</text>
<path d="M781.3 756.5H801M781.3 762H801" fill="none" stroke="#111" stroke-width="1.2" stroke-linecap="butt"/>
<path d="M798 746L784 773" fill="none" stroke="#111" stroke-width="1.2" stroke-linecap="butt"/>
<text x="812" y="766.6" font-family="Liberation Serif" font-size="27" font-style="italic" font-weight="normal" fill="#111">δ</text>
<text x="824.8" y="771.6" font-family="Liberation Sans" font-size="19" font-style="normal" font-weight="normal" fill="#111" textLength="9.1" lengthAdjust="spacingAndGlyphs">0</text>
<text x="839.5" y="766.6" font-family="Liberation Sans" font-size="26" font-style="normal" font-weight="normal" fill="#111" textLength="4.0" lengthAdjust="spacingAndGlyphs">.</text>
<text x="334.5" y="820.2" font-family="Liberation Sans" font-size="26" font-style="italic" font-weight="normal" fill="#111" textLength="16.5" lengthAdjust="spacingAndGlyphs">А</text>
<text x="364.2" y="820.2" font-family="Liberation Sans" font-size="26" font-style="italic" font-weight="normal" fill="#111" textLength="75.8" lengthAdjust="spacingAndGlyphs">также</text>
<text x="450.4" y="820.2" font-family="Liberation Sans" font-size="26" font-style="italic" font-weight="normal" fill="#111" textLength="135.3" lengthAdjust="spacing">выполнено</text>
<text x="597.6" y="820.2" font-family="Liberation Sans" font-size="26" font-style="italic" font-weight="normal" fill="#111" textLength="47.6" lengthAdjust="spacingAndGlyphs">еще</text>
<text x="655.6" y="820.2" font-family="Liberation Sans" font-size="26" font-style="italic" font-weight="normal" fill="#111" textLength="58.0" lengthAdjust="spacing">одно</text>
<text x="724" y="820.2" font-family="Liberation Sans" font-size="26" font-style="italic" font-weight="normal" fill="#111" textLength="171.0" lengthAdjust="spacingAndGlyphs">утверждение.</text>
<text x="336.3" y="857.5" font-family="Liberation Sans" font-size="26" font-style="italic" font-weight="normal" fill="#111" textLength="40.2" lengthAdjust="spacing">(iii)</text>
<text x="389.9" y="857.5" font-family="Liberation Sans" font-size="26" font-style="italic" font-weight="normal" fill="#111" textLength="70.4" lengthAdjust="spacingAndGlyphs">Пусть</text>
<text x="471.5" y="857.5" font-family="Liberation Serif" font-size="29.5" font-style="italic" font-weight="normal" fill="#111">α</text>
<path d="M518 846L500.5 853L518 860" fill="none" stroke="#111" stroke-width="1.2" stroke-linecap="butt"/>
<text x="530" y="857.5" font-family="Liberation Sans" font-size="28" font-style="normal" font-weight="normal" fill="#111" textLength="45.0" lengthAdjust="spacingAndGlyphs">0.5.</text>
<text x="587.7" y="857.5" font-family="Liberation Sans" font-size="26" font-style="italic" font-weight="normal" fill="#111" textLength="141.7" lengthAdjust="spacingAndGlyphs">Множество</text>
<text x="740.7" y="857.5" font-family="Liberation Sans" font-size="26" font-style="italic" font-weight="normal" fill="#111" textLength="188.2" lengthAdjust="spacingAndGlyphs">вероятностных</text>
<text x="941.5" y="857.5" font-family="Liberation Sans" font-size="26" font-style="italic" font-weight="normal" fill="#111" textLength="45.1" lengthAdjust="spacingAndGlyphs">мер</text>
<text x="1000.5" y="862.0" font-family="Liberation Serif" font-size="33" font-style="normal" font-weight="normal" fill="#111" textLength="9.5" lengthAdjust="spacingAndGlyphs">{</text>
<text x="1013.4" y="857.5" font-family="Liberation Sans" font-size="28" font-style="italic" font-weight="normal" fill="#111" textLength="20.4" lengthAdjust="spacingAndGlyphs">m</text>
<text x="1035.9" y="862.0" font-family="Liberation Serif" font-size="19" font-style="italic" font-weight="normal" fill="#111" textLength="10.6" lengthAdjust="spacingAndGlyphs">ν</text>
<text x="1050.5" y="862.0" font-family="Liberation Serif" font-size="33" font-style="normal" font-weight="normal" fill="#111" textLength="9.5" lengthAdjust="spacingAndGlyphs">}</text>
<text x="1064" y="865.8" font-family="Liberation Serif" font-size="19" font-style="italic" font-weight="normal" fill="#111" textLength="10.0" lengthAdjust="spacingAndGlyphs">ν</text>
<path d="M1076 852L1092 858L1076 864" fill="none" stroke="#111" stroke-width="1.0" stroke-linecap="butt"/>
<text x="1095" y="863.8" font-family="Liberation Sans" font-size="19" font-style="normal" font-weight="normal" fill="#111" textLength="10.0" lengthAdjust="spacingAndGlyphs">0</text>
<text x="1119.4" y="857.5" font-family="Liberation Sans" font-size="26" font-style="italic" font-weight="normal" fill="#111" textLength="26.9" lengthAdjust="spacingAndGlyphs">не</text>
<text x="1157.2" y="857.5" font-family="Liberation Sans" font-size="26" font-style="italic" font-weight="normal" fill="#111" textLength="74.5" lengthAdjust="spacingAndGlyphs">имеет</text>
<text x="335.6" y="894" font-family="Liberation Sans" font-size="26" font-style="italic" font-weight="normal" fill="#111" textLength="148.6" lengthAdjust="spacing">предельных</text>
<text x="497.6" y="894" font-family="Liberation Sans" font-size="26" font-style="italic" font-weight="normal" fill="#111" textLength="66.9" lengthAdjust="spacingAndGlyphs">точек</text>
<text x="575.8" y="894" font-family="Liberation Sans" font-size="26" font-style="italic" font-weight="normal" fill="#111" textLength="44.5" lengthAdjust="spacing">при</text>
<text x="631.5" y="894" font-family="Liberation Serif" font-size="30" font-style="italic" font-weight="normal" fill="#111">ν</text>
<path d="M657 885.5H682.3M675 880L682.3 885.5L675 891" fill="none" stroke="#111" stroke-width="1.2" stroke-linecap="butt"/>
<text x="694.2" y="894" font-family="Liberation Sans" font-size="28" font-style="normal" font-weight="normal" fill="#111" textLength="12.7" lengthAdjust="spacingAndGlyphs">0</text>
<text x="720.3" y="894" font-family="Liberation Sans" font-size="26" font-style="italic" font-weight="normal" fill="#111" textLength="11.2" lengthAdjust="spacingAndGlyphs">в</text>
<text x="744.2" y="894" font-family="Liberation Sans" font-size="26" font-style="italic" font-weight="normal" fill="#111" textLength="93.0" lengthAdjust="spacing">смысле</text>
<text x="851.4" y="894" font-family="Liberation Sans" font-size="26" font-style="italic" font-weight="normal" fill="#111" textLength="107.1" lengthAdjust="spacing">*-слабой</text>
<text x="971" y="894" font-family="Liberation Sans" font-size="26" font-style="italic" font-weight="normal" fill="#111" textLength="144.6" lengthAdjust="spacingAndGlyphs">сходимости</text>
<text x="1128.2" y="894" font-family="Liberation Sans" font-size="26" font-style="italic" font-weight="normal" fill="#111" textLength="11.5" lengthAdjust="spacingAndGlyphs">в</text>
<text x="1152.3" y="894" font-family="Liberation Sans" font-size="29" font-style="italic" font-weight="normal" fill="#111" textLength="16.4" lengthAdjust="spacingAndGlyphs">P</text>
<text x="1172.5" y="895" font-family="Liberation Sans" font-size="33" font-style="normal" font-weight="normal" fill="#111" textLength="7.5" lengthAdjust="spacingAndGlyphs">(</text>
<text x="1185.1" y="894" font-family="Liberation Sans" font-size="29" font-style="italic" font-weight="normal" fill="#111" textLength="19.8" lengthAdjust="spacingAndGlyphs">H</text>
<text x="1205.4" y="882.2" font-family="Liberation Sans" font-size="19" font-style="normal" font-weight="normal" fill="#111" textLength="9.9" lengthAdjust="spacingAndGlyphs">2</text>
<text x="1219.1" y="895" font-family="Liberation Sans" font-size="33" font-style="normal" font-weight="normal" fill="#111" textLength="7.4" lengthAdjust="spacingAndGlyphs">)</text>
<text x="1231" y="894" font-family="Liberation Sans" font-size="26" font-style="normal" font-weight="normal" fill="#111" textLength="4.5" lengthAdjust="spacingAndGlyphs">.</text>
<text x="311.6" y="344.5" font-family="Liberation Sans" font-size="16" font-style="normal" font-weight="normal" fill="#ebe9ff" textLength="77.4" lengthAdjust="spacing">Клевцова</text>
<text x="404" y="344.5" font-family="Liberation Sans" font-size="16" font-style="normal" font-weight="normal" fill="#ebe9ff" textLength="221.0" lengthAdjust="spacing">(ИСИ СО РАН, СибГУТИ)</text>
<text x="711" y="344.5" font-family="Liberation Sans" font-size="16" font-style="normal" font-weight="normal" fill="#ebe9ff" textLength="171.4" lengthAdjust="spacing">Предельная теорема</text>
<text x="1215.4" y="344.5" font-family="Liberation Sans" font-size="16" font-style="normal" font-weight="normal" fill="#1a1a30" textLength="58.9" lengthAdjust="spacing">29 / 36</text>
</svg>
<!-- participants panel -->
<div class="a" style="left:1597px;top:98px;width:320px;height:941px;background:#1f1f1f">
  <div class="a" style="left:0;top:0;width:1px;height:941px;background:#454545"></div>
  <div class="a" style="left:1px;top:60px;width:319px;height:1px;background:#141414"></div>
</div>
<div class="t" style="left:1618px;top:122.5px;font-size:16px;font-weight:bold;color:#fff;letter-spacing:-0.2px">Участники</div>
<svg class="a" style="left:1841px;top:127px" width="15" height="5" viewBox="0 0 15 5"><circle cx="2" cy="2.5" r="1.3" fill="#e6e6e6"/><circle cx="7.5" cy="2.5" r="1.3" fill="#e6e6e6"/><circle cx="13" cy="2.5" r="1.3" fill="#e6e6e6"/></svg>
<svg class="a" style="left:1874px;top:124px" width="14" height="14" viewBox="0 0 14 14"><path d="M1 1L13 13M13 1L1 13" stroke="#e6e6e6" stroke-width="1.1"/></svg>

<div class="a" style="left:1618px;top:175px;width:280px;height:32px;background:#333333;border-radius:4px 4px 2px 2px;border-bottom:2px solid #7f85f5"></div>
<div class="t" style="left:1630px;top:183.5px;font-size:14px;color:#d0d0d0;letter-spacing:-0.1px">Пригласить или набрать номер</div>
<svg class="a" style="left:1872px;top:183px" width="17" height="17" viewBox="0 0 17 17"><circle cx="6.8" cy="6.8" r="5.3" fill="none" stroke="#f0f0f0" stroke-width="1.3"/><path d="M10.8 10.8L15.5 15.5" stroke="#f0f0f0" stroke-width="1.5" stroke-linecap="round"/></svg>

<div class="a" style="left:1618px;top:217px;width:279px;height:32px;border:1px solid #5c5c5c;border-radius:4px"></div>
<svg class="a" style="left:1669px;top:225px" width="17" height="16" viewBox="0 0 17 16"><path d="M6 2.5H3A2 2 0 0 0 1 4.5V13A2 2 0 0 0 3 15H11.5A2 2 0 0 0 13.5 13V11" fill="none" stroke="#f0f0f0" stroke-width="1.1"/><path d="M11.5 1L16 5L11.5 9V6.8C8.5 6.8 6.5 7.8 5 10.5C5.3 6.5 7.5 4 11.5 3.5Z" fill="none" stroke="#f0f0f0" stroke-width="1.1" stroke-linejoin="round"/></svg>
<div class="t" style="left:1692.5px;top:226px;font-size:13.6px;font-weight:bold;color:#fff;letter-spacing:-0.05px">Отправка приглашения</div>

<svg class="a" style="left:1604px;top:270px" width="10" height="7" viewBox="0 0 10 7"><path d="M0.5 0.5H9.5L5 6.5Z" fill="#adadad"/></svg>
<div class="t" style="left:1618px;top:268px;font-size:12px;color:#e6e6e6;-webkit-text-stroke:0.4px #e6e6e6;letter-spacing:-0.05px">В этом собрании (9)</div>
<div class="a" style="left:1752px;top:261px;width:144px;height:24px;border:1px solid #5c5c5c;border-radius:4px"></div>
<div class="t" style="left:1762.5px;top:268px;font-size:12px;color:#f2f2f2;-webkit-text-stroke:0.4px #f2f2f2;letter-spacing:0.2px">Отключить все мик...</div>

<!-- rows -->
<div class="a" style="left:1619px;top:302px;width:32px;height:32px;border-radius:50%;overflow:hidden;background:#f2f0ee">
  <div class="a" style="left:4.0px;top:1.7px;width:7.7px;height:18.3px;border:1px solid #5a5a68;background:#e6eaf2"></div>
  <div class="a" style="left:5.7px;top:9.7px;width:4.6px;height:2.3px;background:#7a88aa;filter:blur(0.6px)"></div>
  <div class="a" style="left:26.3px;top:18.3px;width:6.9px;height:1.1px;background:#3a3228"></div>
  <div class="a" style="left:10.9px;top:-0.6px;width:18.9px;height:25.1px;background:#d6bc90;border-radius:50% 50% 35% 35%;filter:blur(0.9px)"></div>
  <div class="a" style="left:15.4px;top:6.9px;width:10.9px;height:13.7px;background:#d8a68e;border-radius:45%;filter:blur(0.6px)"></div>
  <div class="a" style="left:4.6px;top:24.0px;width:27.4px;height:11.4px;background:#d2cabe;border-radius:40% 40% 0 0;filter:blur(0.9px)"></div>
  <div class="a" style="left:13.1px;top:18.9px;width:17.1px;height:13.7px;background:#8c8882;border-radius:40%;filter:blur(0.7px)"></div>
</div>
<div class="t pn" style="left:1659px;top:calc(303.5px + 0.4px)">Чикишева Анна Николаевна</div>
<div class="t ps" style="left:1659px;top:322px">Инициатор</div>

<div class="a pav" style="top:350px;background:#e8d4d6;color:#6b1a24">В</div>
<div class="t pn" style="left:1659px;top:calc(351.5px + 0.4px)">Валерий (гость)</div>
<div class="t ps" style="left:1659px;top:370px">Гость собрания</div>

<div class="a pav" style="top:398px;background:#e2dded;color:#4b4078">ЛО</div>
<div class="t pn" style="left:1659px;top:calc(407.5px + 0.4px)">Лисянский Павел Олегович</div>

<div class="a pav" style="top:446px;background:#d0dceb;color:#143868">МА</div>
<div class="t pn" style="left:1659px;top:calc(447.5px + 0.4px)">Мамаева Екате...&nbsp;&nbsp;&nbsp;(гость)</div>
<div class="t ps" style="left:1659px;top:466px">Гость собрания</div>

<svg class="a" style="left:1619px;top:494px" width="32" height="32" viewBox="0 0 70 70">
  <defs><clipPath id="cpp2"><circle cx="35" cy="35" r="35"/></clipPath><filter id="blp2" x="-20%" y="-20%" width="140%" height="140%"><feGaussianBlur stdDeviation="1.2"/></filter></defs>
  <g clip-path="url(#cpp2)">
    <rect width="70" height="70" fill="#7a6454"/>
    <g filter="url(#blp2)">
      <rect x="40" y="0" width="34" height="70" fill="#a09282"/>
      <rect x="50" y="5" width="6" height="50" fill="#b8aa9a"/>
      <path d="M-2 10C8 4 22 6 32 14V70H-2Z" fill="#a8743e"/>
      <path d="M0 20L30 22M2 32L30 34M2 44L30 46" stroke="#7a5028" stroke-width="2"/>
      <path d="M28 70C30 58 44 52 72 56V70Z" fill="#c0905a"/>
    </g>
    <path d="M32 16C31 9 35 4 41 4C47 4 50 8 49 15L47 13C44 10 37 10 34 13Z" fill="#4a3020"/>
    <ellipse cx="40.5" cy="18" rx="7" ry="9.5" fill="#e0b49c"/>
    <path d="M10 68C8 52 14 34 26 28C30 26 36 26 38 27C46 28 54 32 58 40C60 50 60 58 58 66L44 62L30 70Z" fill="#f0ecea"/>
    <path d="M38 29L24 62" stroke="#1a1a1a" stroke-width="2.6"/>
    <path d="M30 54C36 52 42 54 46 58" stroke="#d8d0cc" stroke-width="2" fill="none"/>
  </g>
</svg>
<div class="t pn" style="left:1659px;top:calc(503.5px + 0.4px)">Потапов Сергей Алексеевич</div>

<div class="a pav" style="top:542px;background:#d3dde6;color:#1e4a5e">РВ</div>
<div class="t pn" style="left:1659px;top:calc(543.5px + 0.4px)">Разова Елена Владимировна</div>
<div class="t ps" style="left:1659px;top:562px">Инициатор</div>

<div class="a pav" style="top:590px;background:#e4ecd9;color:#4c6b30">УЛ</div>
<div class="t pn" style="left:1659px;top:calc(599.5px + 0.4px)">Устюжанинов Илья Леонидович</div>

<div class="a pav" style="top:638px;background:#fbe6d3;color:#8a5a1e">ХЛ</div>
<div class="t pn" style="left:1659px;top:calc(647.5px + 0.4px)">Харина Наталья Леонидовна</div>

<div class="a pav" style="top:686px;background:#dfe5d8;color:#3a4a2a">YK</div>
<div class="t pn" style="left:1659px;top:calc(687.5px + 0.4px)">Yulia Klevtsova (гость)</div>
<div class="t ps" style="left:1659px;top:706px">Гость собрания</div>

<svg class="a" style="left:1604px;top:740px" width="10" height="7" viewBox="0 0 10 7"><path d="M0.5 0.5H9.5L5 6.5Z" fill="#adadad"/></svg>
<div class="t" style="left:1618px;top:737.5px;font-size:12px;color:#e6e6e6;-webkit-text-stroke:0.4px #e6e6e6;letter-spacing:-0.05px">Другие приглашенные (1)</div>

<div class="a pav" style="top:772px;background:#d3dde6;color:#1e4a5e">КВ</div>
<div class="a" style="left:1638.5px;top:791.5px;width:14px;height:14px;border-radius:50%;background:#c4314b;border:2px solid #1f1f1f"></div>
<div class="t pn" style="left:1659px;top:calc(773.5px + 0.4px)">Караваева Екатерина Владимировна</div>
<div class="t ps" style="left:1659px;top:792px">Нет ответа</div>

<svg class="a" style="left:1880px;top:310px" width="16" height="16"><use href="#micoff"/></svg>
<svg class="a" style="left:1880px;top:358px" width="16" height="16"><use href="#micoff"/></svg>
<svg class="a" style="left:1880px;top:406px" width="16" height="16"><use href="#micoff"/></svg>
<svg class="a" style="left:1880px;top:454px" width="16" height="16"><use href="#micoff"/></svg>
<svg class="a" style="left:1880px;top:502px" width="16" height="16"><use href="#micoff"/></svg>
<svg class="a" style="left:1880px;top:550px" width="16" height="17"><use href="#micon"/></svg>
<svg class="a" style="left:1880px;top:598px" width="16" height="16"><use href="#micoff"/></svg>
<svg class="a" style="left:1880px;top:646px" width="16" height="16"><use href="#micoff"/></svg>
<svg class="a" style="left:1880px;top:694px" width="16" height="17"><use href="#micon"/></svg>

<!-- speaker label -->
<div class="a" style="left:10px;top:1002px;width:129px;height:24px;background:rgba(20,20,20,0.72);border-radius:4px"></div>
<div class="t" style="left:16px;top:1008.6px;font-size:11.8px;color:#fff;letter-spacing:0px;-webkit-text-stroke:0.2px #fff">Yulia Klevtsova (гость)</div>
</body></html>
